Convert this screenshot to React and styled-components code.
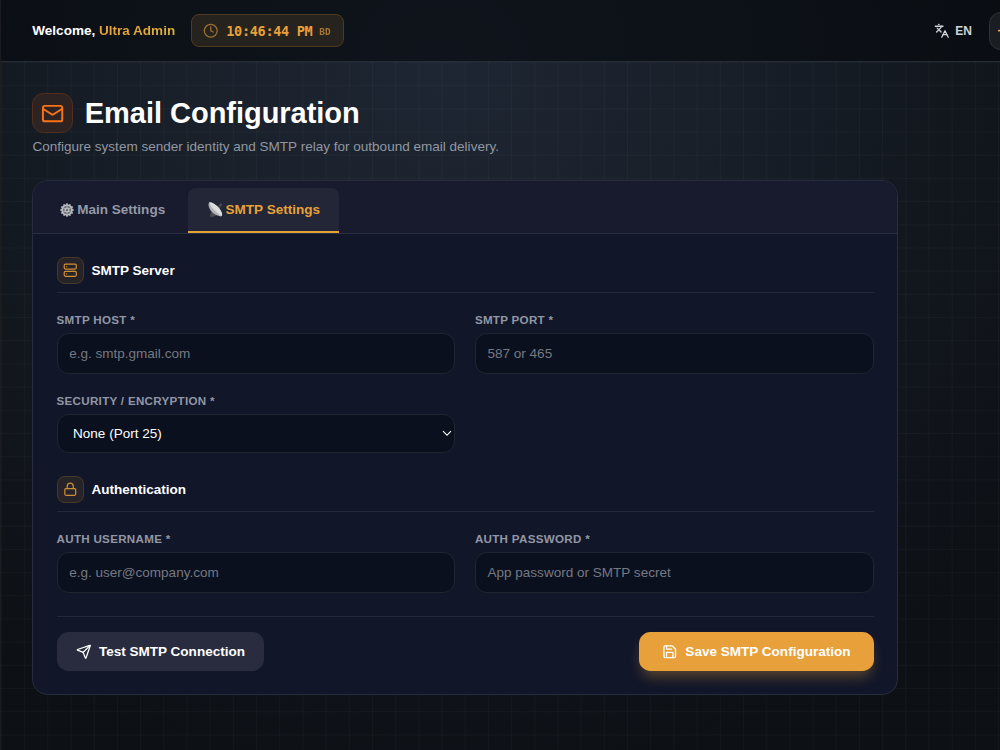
import React from "react";
import styled, { createGlobalStyle } from "styled-components";
import { Clock, Languages, Sun, Mail, Server, Lock, Send, Save } from "lucide-react";

const GlobalStyle = createGlobalStyle`
  *, *::before, *::after { box-sizing: border-box; }
  body {
    margin: 0;
    background: #0b0e13;
    font-family: "Liberation Sans", Arial, sans-serif;
    color: #fff;
    overflow: hidden;
  }
`;

const Page = styled.div`
  display: flex;
  flex-direction: column;
  height: 750px;
  width: 1000px;
  overflow: hidden;
  border-left: 1px solid #1a1c20;
  background: radial-gradient(ellipse 760px 720px at 440px 70px, #1e2633 0%, #19202a 34%, #12171e 68%, #0d1015 100%);
`;

const TopBar = styled.header`
  flex: none;
  display: flex;
  align-items: center;
  height: 62px;
  padding-left: 31.3px;
  background: rgba(7, 9, 15, 0.62);
  border-bottom: 1px solid #262b34;
`;

const Welcome = styled.div`
  font-size: 13.54px;
  font-weight: 700;
  white-space: nowrap;
`;

const UserName = styled.span`
  background: linear-gradient(90deg, #e89f3a, #dcb13c);
  background-clip: text;
  color: transparent;
`;

const ClockPill = styled.div`
  display: flex;
  align-items: center;
  width: 153px;
  height: 33px;
  margin-left: 15.5px;
  padding-left: 11.6px;
  border: 1px solid #4f3b1e;
  border-radius: 8px;
  background: #26231f;
  color: #e8a13a;
  font-family: "DejaVu Sans Mono", monospace;
  font-weight: 700;
  white-space: nowrap;
  svg { opacity: 0.6; }
`;

const Time = styled.span`
  margin-left: 7.5px;
  font-size: 13.54px;
  letter-spacing: -0.32px;
`;

const Zone = styled.span`
  margin: 2px 0 0 7px;
  font-size: 9.4px;
  opacity: 0.66;
`;

const Language = styled.div`
  display: flex;
  align-items: center;
  gap: 6px;
  margin-left: auto;
  font-size: 12px;
  font-weight: 700;
  color: #cfd3da;
`;

const ThemeButton = styled.button`
  flex: none;
  display: flex;
  align-items: center;
  width: 38.7px;
  height: 38px;
  margin: 0 -28px 0 17.5px;
  padding: 0 0 0 7px;
  border: 1px solid #2e3239;
  border-radius: 11.6px;
  background: #1a1d22;
  color: #f0a020;
`;

const Main = styled.main`
  flex: 1;
  padding: 31px 0 0 31.4px;
  background-image:
    linear-gradient(to right, rgba(255, 255, 255, 0.027) 1px, transparent 1px),
    linear-gradient(to bottom, rgba(255, 255, 255, 0.027) 1px, transparent 1px);
  background-size: 23.2px 23.2px;
`;

const TitleRow = styled.div`
  display: flex;
  align-items: center;
  gap: 11.8px;
  height: 40.4px;
`;

const TitleIcon = styled.div`
  display: flex;
  align-items: center;
  justify-content: center;
  width: 40.6px;
  height: 40px;
  border: 1px solid #54301c;
  border-radius: 11.6px;
  background: #2d2323;
  color: #f97316;
`;

const Title = styled.h1`
  margin: 0;
  font-size: 29px;
  line-height: 40px;
  font-weight: 700;
  letter-spacing: -0.03px;
`;

const Subtitle = styled.p`
  margin: 3.8px 0 23.3px;
  font-size: 13.54px;
  line-height: 19.3px;
  color: #9197a3;
`;

const Card = styled.section`
  width: 865.6px;
  height: 515.2px;
  border: 1px solid #262d3f;
  border-radius: 15.5px;
  background: #111629;
  overflow: hidden;
`;

const Tabs = styled.nav`
  display: flex;
  gap: 4.1px;
  height: 53px;
  padding: 7.7px 7.7px 0;
  background: #171b2d;
  border-bottom: 1px solid #2a3042;
`;

const Tab = styled.button`
  display: flex;
  align-items: center;
  gap: 3px;
  height: 44.6px;
  padding: 0 19.15px;
  border: 0;
  border-bottom: 2px solid ${(p) => (p.$active ? "#e8a13a" : "transparent")};
  border-radius: 7.7px 7.7px 0 0;
  background: ${(p) => (p.$active ? "#232637" : "transparent")};
  color: ${(p) => (p.$active ? "#e8a13a" : "#9599a6")};
  font: 700 13.54px "Liberation Sans", Arial, sans-serif;
  white-space: nowrap;
`;

const Form = styled.div`
  padding: 23.2px 23.15px;
`;

const SectionHead = styled.div`
  display: flex;
  align-items: center;
  gap: 7.5px;
  height: 36px;
  padding-bottom: 8px;
  margin-bottom: 19px;
  border-bottom: 1px solid #23293a;
`;

const SectionIcon = styled.div`
  display: flex;
  align-items: center;
  justify-content: center;
  width: 27.4px;
  height: 27.1px;
  border: 1px solid #4a3a25;
  border-radius: 7.7px;
  background: #262428;
  color: #d08f35;
`;

const SectionTitle = styled.h2`
  margin: 0;
  font-size: 13.54px;
  font-weight: 700;
`;

const Grid = styled.div`
  display: grid;
  grid-template-columns: 1fr 1fr;
  gap: 19.4px;
  margin-bottom: 23.1px;
`;

const Field = styled.label`
  display: flex;
  flex-direction: column;
  gap: 5.9px;
`;

const FieldLabel = styled.span`
  font-size: 11.6px;
  line-height: 15.3px;
  font-weight: 700;
  letter-spacing: 0.3px;
  color: #9297a5;
`;

const Input = styled.input`
  width: 100%;
  height: 40.6px;
  padding: 0 11.6px;
  border: 1px solid #20262f;
  border-radius: 11.6px;
  background: #0b101e;
  color: #fff;
  outline: none;
  font: 13.54px "Liberation Sans", Arial, sans-serif;
  &::placeholder { color: #757982; opacity: 1; }
`;

const SelectBox = styled.div`
  display: flex;
  align-items: center;
  justify-content: space-between;
  height: 38.4px;
  padding: 0 2.5px 1px 15.5px;
  border: 1px solid #20262f;
  border-radius: 11.6px;
  background: #0b101e;
  font-size: 13.54px;
`;

const Actions = styled.div`
  display: flex;
  justify-content: space-between;
  padding-top: 15.5px;
  border-top: 1px solid #23293a;
`;

const Button = styled.button`
  display: flex;
  align-items: center;
  justify-content: center;
  gap: 7.7px;
  width: ${(p) => (p.$primary ? "235px" : "207.7px")};
  height: 38.6px;
  padding: 0;
  border: 0;
  border-radius: 11.6px;
  background: ${(p) => (p.$primary ? "#e8a13a" : "#282c3e")};
  box-shadow: ${(p) => (p.$primary ? "0 8px 14px -3px rgba(232, 161, 58, 0.36)" : "none")};
  color: #fff;
  font: 700 13.54px "Liberation Sans", Arial, sans-serif;
  white-space: nowrap;
`;

const teeth = Array.from({ length: 12 }, (_, i) => i * 30);

const GearGlyph = () => (
  <svg width="14" height="14" viewBox="0 0 28 28">
    <g fill="#a4a7ac">
      {teeth.map((a) => (
        <rect key={a} x="12.1" y="0.6" width="3.8" height="5" rx="1" transform={`rotate(${a} 14 14)`} />
      ))}
    </g>
    <circle cx="14" cy="14" r="9.8" fill="#6f737b" stroke="#b9bcc0" strokeWidth="3" />
    <g stroke="#b0b3b8" strokeWidth="1.5">
      {[0, 60, 120].map((a) => (
        <path key={a} d="M14 5v18" transform={`rotate(${a} 14 14)`} />
      ))}
    </g>
    <circle cx="14" cy="14" r="4" fill="#8b8f96" stroke="#d0d2d5" strokeWidth="1.8" />
    <circle cx="14" cy="14" r="1.4" fill="#3c404b" />
  </svg>
);

const DishGlyph = () => (
  <svg width="15" height="15" viewBox="0 0 30 30">
    <path d="M4 29c0-5 2-9 6-10l8 7c-3 3-9 4-14 3z" fill="#4b4d55" />
    <path d="M15 12 26 5M20 18 26 5" stroke="#54555c" strokeWidth="1.8" />
    <circle cx="25.5" cy="5.5" r="2.6" fill="#4a4b51" />
    <path d="M2 1C-2 10 8 26 26 29c5-3 1-12-7-20S4-1 2 1z" fill="#b3b4b9" />
    <path d="M3 1c4-1 11 3 16 8s12 15 8 19C20 24 6 12 3 1z" fill="#dedfe1" />
    <path d="M7 5c4 8 10 15 18 20" stroke="#c3c4c8" strokeWidth="0.9" fill="none" />
  </svg>
);

const ChevronGlyph = () => (
  <svg width="10" height="8" viewBox="0 0 10 8" fill="none" stroke="#fff" strokeWidth="1.1">
    <path d="M1 2.2 5 6.2 9 2.2" />
  </svg>
);

function TextField({ label, placeholder, type = "text" }) {
  return (
    <Field>
      <FieldLabel>{label}</FieldLabel>
      <Input type={type} placeholder={placeholder} />
    </Field>
  );
}

function Section({ icon: Icon, title }) {
  return (
    <SectionHead>
      <SectionIcon><Icon size={14.5} /></SectionIcon>
      <SectionTitle>{title}</SectionTitle>
    </SectionHead>
  );
}

export default function App() {
  return (
    <Page>
      <GlobalStyle />
      <TopBar>
        <Welcome>Welcome, <UserName>Ultra Admin</UserName></Welcome>
        <ClockPill>
          <Clock size={15.5} />
          <Time>10:46:44 PM</Time>
          <Zone>BD</Zone>
        </ClockPill>
        <Language><Languages size={15.5} />EN</Language>
        <ThemeButton aria-label="Theme"><Sun size={19.3} /></ThemeButton>
      </TopBar>
      <Main>
        <TitleRow>
          <TitleIcon><Mail size={23.2} /></TitleIcon>
          <Title>Email Configuration</Title>
        </TitleRow>
        <Subtitle>Configure system sender identity and SMTP relay for outbound email delivery.</Subtitle>
        <Card>
          <Tabs>
            <Tab><GearGlyph />Main Settings</Tab>
            <Tab $active><DishGlyph />SMTP Settings</Tab>
          </Tabs>
          <Form>
            <Section icon={Server} title="SMTP Server" />
            <Grid>
              <TextField label="SMTP HOST *" placeholder="e.g. smtp.gmail.com" />
              <TextField label="SMTP PORT *" placeholder="587 or 465" />
              <Field as="div">
                <FieldLabel>SECURITY / ENCRYPTION *</FieldLabel>
                <SelectBox>None (Port 25)<ChevronGlyph /></SelectBox>
              </Field>
            </Grid>
            <Section icon={Lock} title="Authentication" />
            <Grid>
              <TextField label="AUTH USERNAME *" placeholder="e.g. user@company.com" />
              <TextField label="AUTH PASSWORD *" placeholder="App password or SMTP secret" type="password" />
            </Grid>
            <Actions>
              <Button><Send size={15.5} />Test SMTP Connection</Button>
              <Button $primary><Save size={15.5} />Save SMTP Configuration</Button>
            </Actions>
          </Form>
        </Card>
      </Main>
    </Page>
  );
}
